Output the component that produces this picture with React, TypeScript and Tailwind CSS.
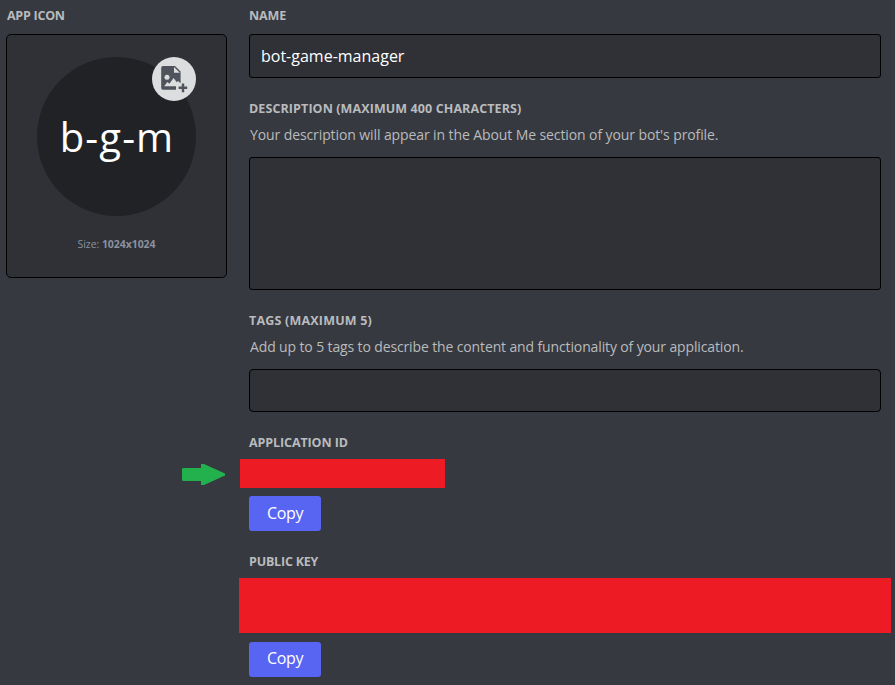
import type { ReactNode } from "react";

function Label({ children, className = "" }: { children: ReactNode; className?: string }) {
  return (
    <h5 className={`h-4 whitespace-nowrap text-[12.5px] font-bold leading-4 text-[#b9bbbe] ${className}`}>
      {children}
    </h5>
  );
}

function Hint({ children, className = "" }: { children: ReactNode; className?: string }) {
  return (
    <p className={`mt-2 h-5 whitespace-nowrap pl-px text-[14px] leading-5 text-[#b9bbbe] ${className}`}>
      {children}
    </p>
  );
}

function CopyButton({ className = "" }: { className?: string }) {
  return (
    <button
      className={`flex h-[35px] w-[72px] items-center justify-center rounded-[3px] bg-[#5865f2] text-[16px] tracking-[-0.35px] text-white ${className}`}
    >
      Copy
    </button>
  );
}

function AddImageIcon() {
  return (
    <svg className="size-11" viewBox="0 0 44 44">
      <path
        fill="#4f545c"
        d="M11 9H23L28.6 14.6V26.2L26 24L24.8 25.3L21.6 21L17.4 26.8L15.4 25L12.2 29.3H24V32.8H11Q9.2 32.8 9.2 31V10.8Q9.2 9 11 9Z"
      />
      <path fill="#dcddde" d="M22 9.9L27.8 15.7H22Z" />
      <circle cx="15" cy="20.2" r="2.5" fill="#dcddde" />
      <path fill="#4f545c" d="M29.8 26.4H32.2V29.6H35.2V32H32.2V35.2H29.8V32H26.6V29.6H29.8Z" />
    </svg>
  );
}

export default function App() {
  return (
    <main className="flex h-[685px] w-[895px] gap-[22px] overflow-hidden bg-[#36393f] pl-1.5 pt-2 font-['Open_Sans','Noto_Sans',sans-serif]">
      <section className="w-[221px] shrink-0">
        <Label className="tracking-[-0.25px] pl-px">APP ICON</Label>
        <div className="mt-2.5 flex h-[244px] flex-col items-center rounded-[5px] border border-black bg-[#2f3136] pt-[22px]">
          <div className="relative flex size-[159px] items-center justify-center rounded-full bg-[#202225]">
            <span className="whitespace-nowrap pl-px text-[40px] leading-[54px] tracking-[1.1px] text-white">
              b-g-m
            </span>
            <div className="absolute right-0 top-0 size-11 rounded-full bg-[#dcddde]">
              <AddImageIcon />
            </div>
          </div>
          <p className="mt-5 whitespace-nowrap text-[10.5px] leading-4 tracking-[-0.05px] text-[#8a91a0]">
            Size: <b>1024x1024</b>
          </p>
        </div>
      </section>
      <section className="flex w-[632px] shrink-0 flex-col">
        <Label className="tracking-[-0.1px]">NAME</Label>
        <div className="mt-2.5 flex h-11 items-center rounded-[3px] border border-black bg-[#2f3136] pl-[11px] text-[16px] text-white">
          bot-game-manager
        </div>
        <Label className="mt-[23px] tracking-[0.1px]">DESCRIPTION (MAXIMUM 400 CHARACTERS)</Label>
        <Hint className="tracking-[-0.1px]">
          Your description will appear in the About Me section of your bot's profile.
        </Hint>
        <div className="mt-3 h-[133px] rounded-[3px] border border-black bg-[#2f3136]" />
        <Label className="mt-[23px] tracking-[0.2px]">TAGS (MAXIMUM 5)</Label>
        <Hint className="tracking-[-0.13px]">
          Add up to 5 tags to describe the content and functionality of your application.
        </Hint>
        <div className="mt-3 h-[43px] rounded-[4px] border border-black bg-[#2f3136]" />
        <Label className="mt-[23px] tracking-[-0.1px]">APPLICATION ID</Label>
        <div className="-ml-[67px] mt-2 flex h-[29px] items-center gap-[15px]">
          <svg className="mt-0.5 h-[21px] w-[43px]" viewBox="0 0 43 21">
            <path fill="#22b14c" d="M1 4H19V0H22L43 9.5V11.5L22 21H19V17H1L0 16V5Z" />
          </svg>
          <div className="h-[29px] w-[205px] bg-[#ed1c24]" />
        </div>
        <CopyButton className="mt-2 pb-0.5" />
        <Label className="mt-[23px] tracking-[-0.2px]">PUBLIC KEY</Label>
        <div className="-ml-2.5 mt-2 h-[55px] w-[652px] bg-[#ed1c24]" />
        <CopyButton className="mt-[9px] pb-[3px]" />
      </section>
    </main>
  );
}
